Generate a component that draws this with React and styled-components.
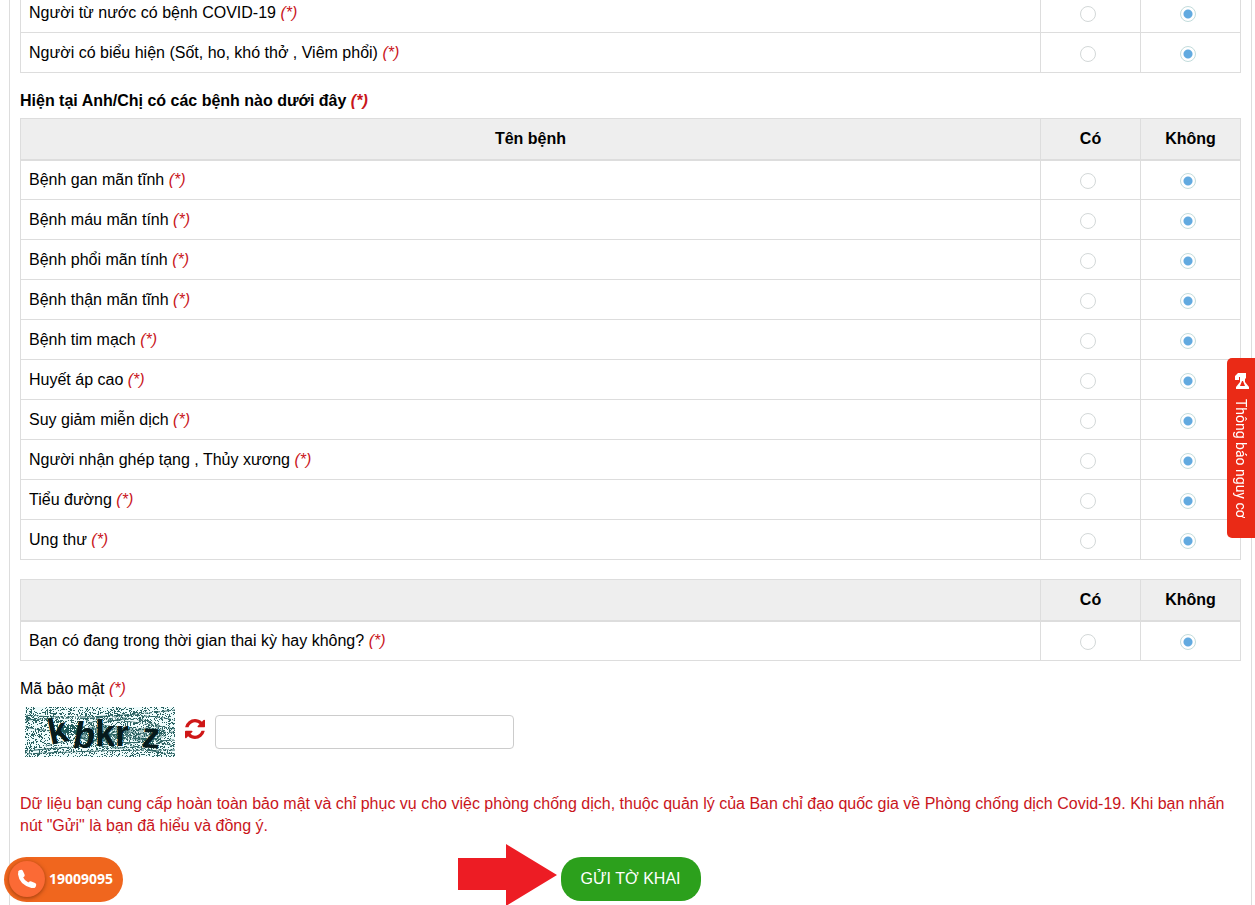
import React, { useState } from 'react';
import styled, { createGlobalStyle, css } from 'styled-components';

const symptoms = [
  { id: 'country', label: 'Người từ nước có bệnh COVID-19' },
  { id: 'signs', label: 'Người có biểu hiện (Sốt, ho, khó thở , Viêm phổi)' },
];

const diseases = [
  { id: 'liver', label: 'Bệnh gan mãn tĩnh' },
  { id: 'blood', label: 'Bệnh máu mãn tính' },
  { id: 'lung', label: 'Bệnh phổi mãn tính' },
  { id: 'kidney', label: 'Bệnh thận mãn tĩnh' },
  { id: 'heart', label: 'Bệnh tim mạch' },
  { id: 'pressure', label: 'Huyết áp cao' },
  { id: 'immune', label: 'Suy giảm miễn dịch' },
  { id: 'transplant', label: 'Người nhận ghép tạng , Thủy xương' },
  { id: 'diabetes', label: 'Tiểu đường' },
  { id: 'cancer', label: 'Ung thư' },
];

const pregnancy = [
  { id: 'pregnant', label: 'Bạn có đang trong thời gian thai kỳ hay không?' },
];

const Required = () => <Star>(*)</Star>;

const QuestionTable = ({ rows, head, cut, tight }) => {
  const [answers, setAnswers] = useState({});

  return (
    <Table $cut={cut} $tight={tight}>
      {head !== undefined && (
        <thead>
          <tr>
            <HeadCell>{head}</HeadCell>
            <HeadCell $narrow>Có</HeadCell>
            <HeadCell $narrow>Không</HeadCell>
          </tr>
        </thead>
      )}
      <tbody>
        {rows.map(({ id, label }) => (
          <tr key={id}>
            <Cell id={`${id}-label`}>
              {label} <Required />
            </Cell>
            {['Có', 'Không'].map((choice) => (
              <Cell key={choice} $narrow>
                <Radio
                  type="radio"
                  name={id}
                  aria-label={choice}
                  aria-describedby={`${id}-label`}
                  checked={(answers[id] || 'Không') === choice}
                  onChange={() => setAnswers({ ...answers, [id]: choice })}
                />
              </Cell>
            ))}
          </tr>
        ))}
      </tbody>
    </Table>
  );
};

// same seed every time, so the speckles don't jump between renders
const speckles = (seed, share) => {
  let n = seed;
  let d = '';
  for (let y = 0; y < 50; y++) {
    for (let x = 0; x < 150; x++) {
      n = (n + 0x6d2b79f5) | 0;
      let t = Math.imul(n ^ (n >>> 15), 1 | n);
      t = (t + Math.imul(t ^ (t >>> 7), 61 | t)) ^ t;
      if (((t ^ (t >>> 14)) >>> 0) / 4294967296 < share) d += `M${x} ${y}h1v1h-1z`;
    }
  }
  return d;
};

const darkDots = speckles(71, 0.34);
const lightDots = speckles(1913, 0.16);

const Captcha = () => (
  <CaptchaArt viewBox="0 0 150 50" role="img" aria-label="Mã bảo mật">
    <rect width="150" height="50" fill="#effcfc" />
    <path d={darkDots} fill="#2b6262" shapeRendering="crispEdges" />
    <g fill="#1f5c5c">
      <ellipse cx="48" cy="23" rx="14" ry="5" />
      <ellipse cx="80" cy="27" rx="26" ry="9" opacity="0.5" />
      <ellipse cx="118" cy="27" rx="24" ry="7" opacity="0.35" />
    </g>
    <g fill="none" stroke="#2b6262" strokeWidth="1">
      <path d="M0 8Q60 14 150 3" />
      <path d="M0 13Q70 6 150 22" />
      <path d="M60 12Q110 4 150 13" />
      <path d="M0 20Q60 32 150 25" />
      <path d="M18 40Q80 20 150 39" />
      <path d="M0 44Q60 38 150 33" />
      <path d="M0 47Q70 43 150 43" />
      <path d="M60 12Q100 44 150 47" />
      <ellipse cx="95" cy="26" rx="40" ry="15" />
      <ellipse cx="104" cy="24" rx="34" ry="12" />
    </g>
    <path d={lightDots} fill="#effcfc" shapeRendering="crispEdges" />
    <g
      fill="#061a1c"
      fontFamily="'Liberation Sans', Arial, sans-serif"
      fontWeight="bold"
    >
      <text x="23" y="36" fontSize="36" transform="rotate(-12 33 25)">k</text>
      <text x="48" y="41" fontSize="36" fontStyle="italic">b</text>
      <text x="70" y="39" fontSize="36">k</text>
      <text x="90" y="39" fontSize="36">r</text>
      <text x="117" y="41" fontSize="36" transform="rotate(4 127 30)">z</text>
    </g>
  </CaptchaArt>
);

const RefreshIcon = () => (
  <svg width="20" height="20" viewBox="0 0 1536 1536" fill="currentColor" aria-hidden="true">
    <path d="M1511 928q0 5-1 7-64 268-268 434.500T764 1536q-146 0-282.500-55T238 1324l-129 129q-19 19-45 19t-45-19-19-45V960q0-26 19-45t45-19h448q26 0 45 19t19 45-19 45l-137 137q71 66 161 102t187 36q134 0 250-65t186-179q11-17 53-117 8-23 30-23h192q13 0 22.500 9.500t9.500 22.500zm25-800v448q0 26-19 45t-45 19h-448q-26 0-45-19t-19-45 19-45l138-138Q969 256 768 256q-134 0-250 65T332 500q-11 17-53 117-8 23-30 23H50q-13 0-22.500-9.500T18 608v-7q65-268 270-434.500T768 0q146 0 284 55.500T1297 212l130-129q19-19 45-19t45 19 19 45z" />
  </svg>
);

const PhoneIcon = () => (
  <svg width="20" height="20" viewBox="0 0 20 20" aria-hidden="true">
    <path d="M3 5Q4 14 15 17" fill="none" stroke="#fff" strokeWidth="4" strokeLinecap="round" />
    <rect x="2" y="1" width="5" height="8" rx="2" fill="#fff" transform="rotate(-24 4 5)" />
    <rect x="11" y="13" width="8" height="5" rx="2" fill="#fff" transform="rotate(24 15 16)" />
  </svg>
);

const AlertIcon = () => (
  <svg width="16" height="16" viewBox="0 0 16 16" aria-hidden="true">
    <path fill="#fff" d="M2 3 5 0h8v5l-1 1v3l4 5v2H3v-2l4-5V4H6v3H2z" />
    <path fill="#ea2a16" d="M9 8h1l2 5H7z" />
  </svg>
);

const App = () => (
  <>
    <GlobalStyle />
    <Panel>
      <QuestionTable rows={symptoms} cut tight />
      <Title>
        Hiện tại Anh/Chị có các bệnh nào dưới đây <Required />
      </Title>
      <QuestionTable rows={diseases} head="Tên bệnh" />
      <QuestionTable rows={pregnancy} head="" tight />
      <label htmlFor="captcha">
        Mã bảo mật <Required />
      </label>
      <CaptchaRow>
        <Captcha />
        <RefreshButton type="button" aria-label="Đổi mã">
          <RefreshIcon />
        </RefreshButton>
        <CaptchaInput id="captcha" type="text" />
      </CaptchaRow>
      <Notice>
        Dữ liệu bạn cung cấp hoàn toàn bảo mật và chỉ phục vụ cho việc phòng chống dịch, thuộc quản
        lý của Ban chỉ đạo quốc gia về Phòng chống dịch Covid-19. Khi bạn nhấn nút "Gửi" là bạn đã
        hiểu và đồng ý.
      </Notice>
      <Actions>
        <SubmitWrap>
          <Pointer viewBox="0 0 99 62" aria-hidden="true">
            <path d="M0 14H48V0L99 31 48 62V46H0z" fill="#ed1c24" />
          </Pointer>
          <Submit type="button">GỬI TỜ KHAI</Submit>
        </SubmitWrap>
      </Actions>
    </Panel>
    <Hotline href="tel:19009095">
      <PhoneBadge>
        <PhoneIcon />
      </PhoneBadge>
      19009095
    </Hotline>
    <RiskTab type="button">
      <AlertIcon />
      Thông báo nguy cơ
    </RiskTab>
  </>
);

const GlobalStyle = createGlobalStyle`
  * {
    box-sizing: border-box;
  }
  body {
    margin: 0;
    background: #fff;
    color: #000;
    font: 16px/22px 'Liberation Sans', Arial, sans-serif;
  }
`;

const Panel = styled.main`
  min-height: 100vh;
  margin: 0 3px 0 9px;
  padding: 0 10px;
  border: solid #ddd;
  border-width: 0 1px;
  overflow: hidden;
`;

const Star = styled.em`
  color: #c9151b;
`;

const Table = styled.table`
  width: 100%;
  margin-top: ${({ $cut }) => ($cut ? '-8px' : '0')};
  margin-bottom: ${({ $tight }) => ($tight ? '17px' : '19px')};
  border-collapse: collapse;
  table-layout: fixed;
`;

const narrow = css`
  width: 100px;
  text-align: center;
`;

const HeadCell = styled.th`
  height: 41px;
  padding: 8px;
  border: 1px solid #ddd;
  border-bottom-width: 2px;
  background: #eee;
  ${({ $narrow }) => $narrow && narrow}
`;

const Cell = styled.td`
  height: 40px;
  padding: 8px;
  border: 1px solid #ddd;
  ${({ $narrow }) => $narrow && narrow}
`;

const Radio = styled.input`
  appearance: none;
  width: 16px;
  height: 16px;
  margin: 4px 6px 0 0;
  border: 1px solid #d3d8d8;
  border-radius: 50%;
  background: #fff;
  vertical-align: top;
  &:checked {
    border-color: #c3dcdc;
    background: radial-gradient(circle, #62aae0 4px, #fff 5px);
  }
`;

const Title = styled.h2`
  margin: 0 0 6px;
  font-size: 16px;
  line-height: 22px;
`;

const CaptchaRow = styled.div`
  display: flex;
  align-items: center;
  gap: 10px;
  margin: 7px 0 36px;
  padding-left: 5px;
`;

const CaptchaArt = styled.svg`
  width: 150px;
  height: 50px;
`;

const RefreshButton = styled.button`
  display: flex;
  padding: 0 0 6px;
  border: 0;
  background: none;
  color: #cf1717;
  cursor: pointer;
`;

const CaptchaInput = styled.input`
  width: 299px;
  height: 34px;
  padding: 6px 12px;
  border: 1px solid #ccc;
  border-radius: 4px;
  font: inherit;
`;

const Notice = styled.p`
  margin: 0 0 20px;
  color: #c9151b;
`;

const Actions = styled.div`
  display: flex;
  justify-content: center;
`;

const SubmitWrap = styled.div`
  position: relative;
`;

const Pointer = styled.svg`
  position: absolute;
  top: -13px;
  right: calc(100% + 4px);
  width: 99px;
  height: 62px;
`;

const Submit = styled.button`
  height: 44px;
  padding: 0 20px;
  border: 0;
  border-radius: 20px;
  background: #2ca01c;
  color: #fff;
  font: inherit;
  cursor: pointer;
`;

const Hotline = styled.a`
  position: fixed;
  bottom: 3px;
  left: 4px;
  display: flex;
  align-items: center;
  gap: 4px;
  height: 45px;
  padding: 0 10px 2px 5px;
  border-radius: 23px;
  background: #f0661e;
  color: #fff;
  font-family: 'Noto Sans', sans-serif;
  font-size: 14px;
  font-weight: bold;
  text-decoration: none;
`;

const PhoneBadge = styled.span`
  display: flex;
  align-items: center;
  justify-content: center;
  width: 36px;
  height: 36px;
  border-radius: 50%;
  background: #fb6a35;
  box-shadow: 0 1px 4px rgba(90, 30, 0, 0.6);
`;

const RiskTab = styled.button`
  position: fixed;
  top: 358px;
  right: 0;
  display: flex;
  align-items: center;
  gap: 10px;
  width: 28px;
  height: 180px;
  padding: 15px 0;
  border: 0;
  border-radius: 5px 0 0 5px;
  background: #ea2a16;
  color: #fff;
  font: 14px/28px Roboto, sans-serif;
  writing-mode: vertical-rl;
  cursor: pointer;
`;

export default App;
